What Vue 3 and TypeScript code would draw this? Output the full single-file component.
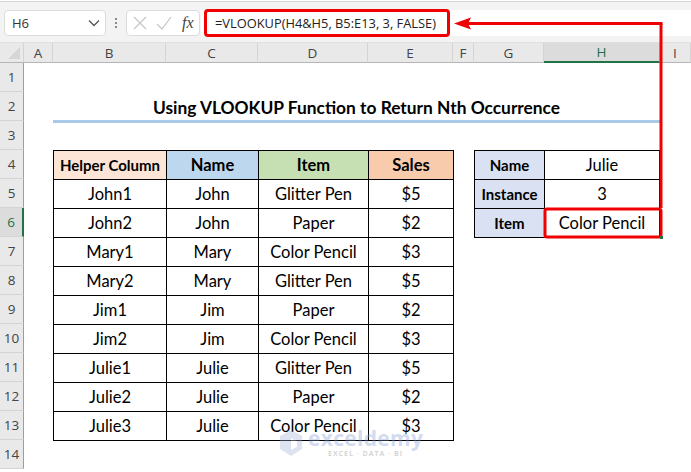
<script setup lang="ts">
const cols = [
  { l: 'A', sel: false }, { l: 'B', sel: false }, { l: 'C', sel: false }, { l: 'D', sel: false },
  { l: 'E', sel: false }, { l: 'F', sel: false }, { l: 'G', sel: false }, { l: 'H', sel: true }, { l: 'I', sel: false },
]
const rowNums = Array.from({ length: 14 }, (_, i) => i + 1)
const heads = [
  { t: 'Helper Column', c: 'peach' }, { t: 'Name', c: 'blue' }, { t: 'Item', c: 'green' }, { t: 'Sales', c: 'orange' },
]
const rows: string[][] = [
  ['John1', 'John', 'Glitter Pen', '$5'],
  ['John2', 'John', 'Paper', '$2'],
  ['Mary1', 'Mary', 'Color Pencil', '$3'],
  ['Mary2', 'Mary', 'Glitter Pen', '$5'],
  ['Jim1', 'Jim', 'Paper', '$2'],
  ['Jim2', 'Jim', 'Color Pencil', '$3'],
  ['Julie1', 'Julie', 'Glitter Pen', '$5'],
  ['Julie2', 'Julie', 'Paper', '$2'],
  ['Julie3', 'Julie', 'Color Pencil', '$3'],
]
const lookup: [string, string][] = [['Name', 'Julie'], ['Instance', '3'], ['Item', 'Color Pencil']]
</script>

<template>
  <div class="app">
    <div class="top-line"></div>
    <div class="formula-bar">
      <div class="name-box">
        <span>H6</span>
        <svg width="12" height="8" viewBox="0 0 12 8"><path d="M1 1.5 L6 6.5 L11 1.5" fill="none" stroke="#555" stroke-width="1.3" /></svg>
      </div>
      <div class="dots"><i></i><i></i><i></i></div>
      <div class="fx-box">
        <svg width="14" height="14" viewBox="0 0 14 14"><path d="M1 1 L13 13 M13 1 L1 13" stroke="#c6c6c6" stroke-width="1.2" fill="none" /></svg>
        <svg width="16" height="14" viewBox="0 0 16 14"><path d="M1 8 L6 13 L15 1" stroke="#c6c6c6" stroke-width="1.2" fill="none" /></svg>
        <span class="fx">fx</span>
      </div>
      <div class="formula-input">
        <span class="formula-box">=VLOOKUP(H4&amp;H5, B5:E13, 3, FALSE)</span>
      </div>
    </div>

    <div class="sheet">
      <div class="corner"><span class="tri"></span></div>
      <div
        v-for="(c, i) in cols"
        :key="c.l"
        class="col-head"
        :class="{ sel: c.sel }"
        :style="{ gridColumn: i + 2 }"
      >{{ c.l }}</div>
      <div
        v-for="n in rowNums"
        :key="n"
        class="row-head"
        :class="{ sel: n === 6 }"
        :style="{ gridRow: n + 1 }"
      >{{ n }}</div>

      <div class="title">Using VLOOKUP Function to Return Nth Occurrence</div>

      <div class="data-table">
        <div v-for="h in heads" :key="h.t" class="cell head" :class="h.c">{{ h.t }}</div>
        <template v-for="(r, i) in rows" :key="i">
          <div v-for="(v, j) in r" :key="j" class="cell">{{ v }}</div>
        </template>
      </div>

      <div class="lookup-table">
        <template v-for="p in lookup" :key="p[0]">
          <div class="cell head lav">{{ p[0] }}</div>
          <div class="cell">{{ p[1] }}</div>
        </template>
      </div>

      <svg class="overlay" width="691" height="472" viewBox="0 0 691 472">
        <path d="M661 23.5 V208" stroke="#f00000" stroke-width="3" fill="none" />
        <path d="M662.5 23.5 H468" stroke="#f00000" stroke-width="3" fill="none" />
        <path d="M454 23.5 L471 17.5 L468 23.5 L471 29.5 Z" fill="#f00000" />
        <rect x="545" y="209" width="116" height="28" rx="2" fill="none" stroke="#f00000" stroke-width="3" />
        <rect x="660" y="236" width="3" height="3" fill="#217346" />
      </svg>

      <div class="watermark">
        <svg width="24" height="28" viewBox="0 0 24 28"><path d="M12 1 L23 7 V20 L12 27 L1 20 V7 Z" fill="#9fb1d8" /><path d="M12 9 L18 12.5 V18 L12 21 Z" fill="#ffffff" /></svg>
        <div class="wm-text">
          <span class="wm-name">exceldemy</span>
          <span class="wm-sub">EXCEL · DATA · BI</span>
        </div>
      </div>
    </div>
  </div>
</template>

<style>
html, body { margin: 0; background: #fff; }
</style>

<style scoped>
.app {
  width: 691px;
  height: 472px;
  overflow: hidden;
  background: #fff;
  position: relative;
  font-family: "Lato", "Liberation Sans", sans-serif;
}
.top-line { height: 1px; background: #fff; border-bottom: 1px solid #d4d4d4; }
.formula-bar {
  height: 41px;
  box-sizing: border-box;
  background: #f3f3f3;
  display: flex;
  align-items: flex-start;
  padding: 8px 0 0 4px;
  border-bottom: 1px solid #e0e0e0;
}
.name-box {
  width: 102px;
  height: 26px;
  box-sizing: border-box;
  background: #fff;
  border: 1px solid #dcdcdc;
  border-radius: 4px;
  display: flex;
  align-items: center;
  justify-content: space-between;
  padding: 0 5px 0 7px;
  font: 13px "Open Sans", sans-serif;
  color: #333;
}
.dots {
  width: 20px;
  height: 26px;
  display: flex;
  flex-direction: column;
  align-items: center;
  justify-content: center;
  gap: 2px;
}
.dots i { width: 2px; height: 2px; background: #8a8a8a; }
.fx-box {
  width: 74px;
  height: 26px;
  box-sizing: border-box;
  background: #fff;
  border: 1px solid #dcdcdc;
  border-radius: 4px;
  display: flex;
  align-items: center;
  gap: 9px;
  padding: 0 4px 0 6px;
}
.fx { font: italic 16px "Liberation Serif", serif; color: #444; margin-left: 1px; }
.formula-input {
  flex: 1;
  height: 26px;
  margin-left: 1px;
  background: #fff;
  position: relative;
}
.formula-box {
  position: absolute;
  left: 3px;
  top: -1px;
  width: 246px;
  height: 28px;
  box-sizing: border-box;
  border: 3px solid #f00000;
  border-radius: 4px;
  background: #fff;
  font: 12.85px "Open Sans", sans-serif;
  color: #222;
  display: flex;
  align-items: center;
  padding-left: 8px;
  white-space: nowrap;
}
.sheet {
  display: grid;
  grid-template-columns: 24px 29px 113px 92px 110px 85px 21px 70px 116px 31px;
  grid-template-rows: 20px repeat(14, 29px);
  height: 429px;
}
.corner {
  grid-row: 1;
  grid-column: 1;
  background: #e9e9e9;
  border-right: 1px solid #d4d4d4;
  border-bottom: 1px solid #b5b5b5;
  position: relative;
  box-sizing: border-box;
}
.tri {
  position: absolute; right: 3px; bottom: 3px; width: 0; height: 0;
  border-style: solid; border-width: 0 0 12px 12px;
  border-color: transparent transparent #d6d6d6 transparent;
}
.col-head {
  box-sizing: border-box;
  background: #e9e9e9;
  border-right: 1px solid #d4d4d4;
  border-bottom: 1px solid #b5b5b5;
  font: 13.5px "Open Sans", sans-serif;
  color: #444;
  display: flex;
  align-items: center;
  justify-content: center;
  grid-row: 1;
}
.col-head.sel { background: #dcdcdc; border-bottom: 2px solid #217346; color: #217346; }
.row-head {
  grid-column: 1;
  box-sizing: border-box;
  background: #e9e9e9;
  border-right: 1px solid #9d9d9d;
  border-bottom: 1px solid #d4d4d4;
  font: 13.5px "Open Sans", sans-serif;
  color: #444;
  display: flex;
  align-items: center;
  justify-content: center;
}
.row-head.sel { background: #dcdcdc; border-right: 2px solid #217346; color: #217346; }
.title {
  grid-column: 3 / 10;
  grid-row: 3;
  height: 31px;
  box-sizing: border-box;
  border-bottom: 3px solid #a9c9e8;
  padding-top: 3px;
  font-weight: 700;
  font-size: 17.35px;
  color: #000;
  display: flex;
  align-items: center;
  justify-content: center;
}
.data-table {
  grid-column: 3 / 7;
  grid-row: 5 / 15;
  display: grid;
  grid-template-columns: 113px 92px 110px 85px;
  grid-auto-rows: 29px;
  border-left: 1px solid #000;
  border-top: 1px solid #000;
  align-self: start;
  justify-self: start;
}
.lookup-table {
  grid-column: 8 / 10;
  grid-row: 5 / 8;
  display: grid;
  grid-template-columns: 70px 115px;
  grid-auto-rows: 29px;
  border-left: 1px solid #000;
  border-top: 1px solid #000;
  align-self: start;
  justify-self: start;
}
.cell {
  box-sizing: border-box;
  border-right: 1px solid #000;
  border-bottom: 1px solid #000;
  display: flex;
  align-items: center;
  justify-content: center;
  font-size: 16.5px;
  color: #000;
  white-space: nowrap;
}
.cell.head { font-weight: 700; }
.peach { background: #fce4d6; font-size: 15px; }
.blue { background: #bdd7ee; }
.green { background: #c6e0b4; }
.orange { background: #f8cbad; }
.cell.lav { background: #d9e1f2; font-size: 15px; }
.overlay { position: absolute; left: 0; top: 0; pointer-events: none; }
.watermark {
  position: absolute;
  left: 279px;
  top: 428px;
  display: flex;
  align-items: center;
  gap: 5px;
  opacity: 0.35;
  pointer-events: none;
}
.wm-text { display: flex; flex-direction: column; align-items: center; line-height: 1; }
.wm-name { font: 700 21px "Open Sans", sans-serif; color: #7f9ad6; line-height: 20px; letter-spacing: 0.3px; }
.wm-sub { font: 700 7px "Open Sans", sans-serif; color: #8a8a8a; letter-spacing: 1px; margin-top: 1px; }
</style>
